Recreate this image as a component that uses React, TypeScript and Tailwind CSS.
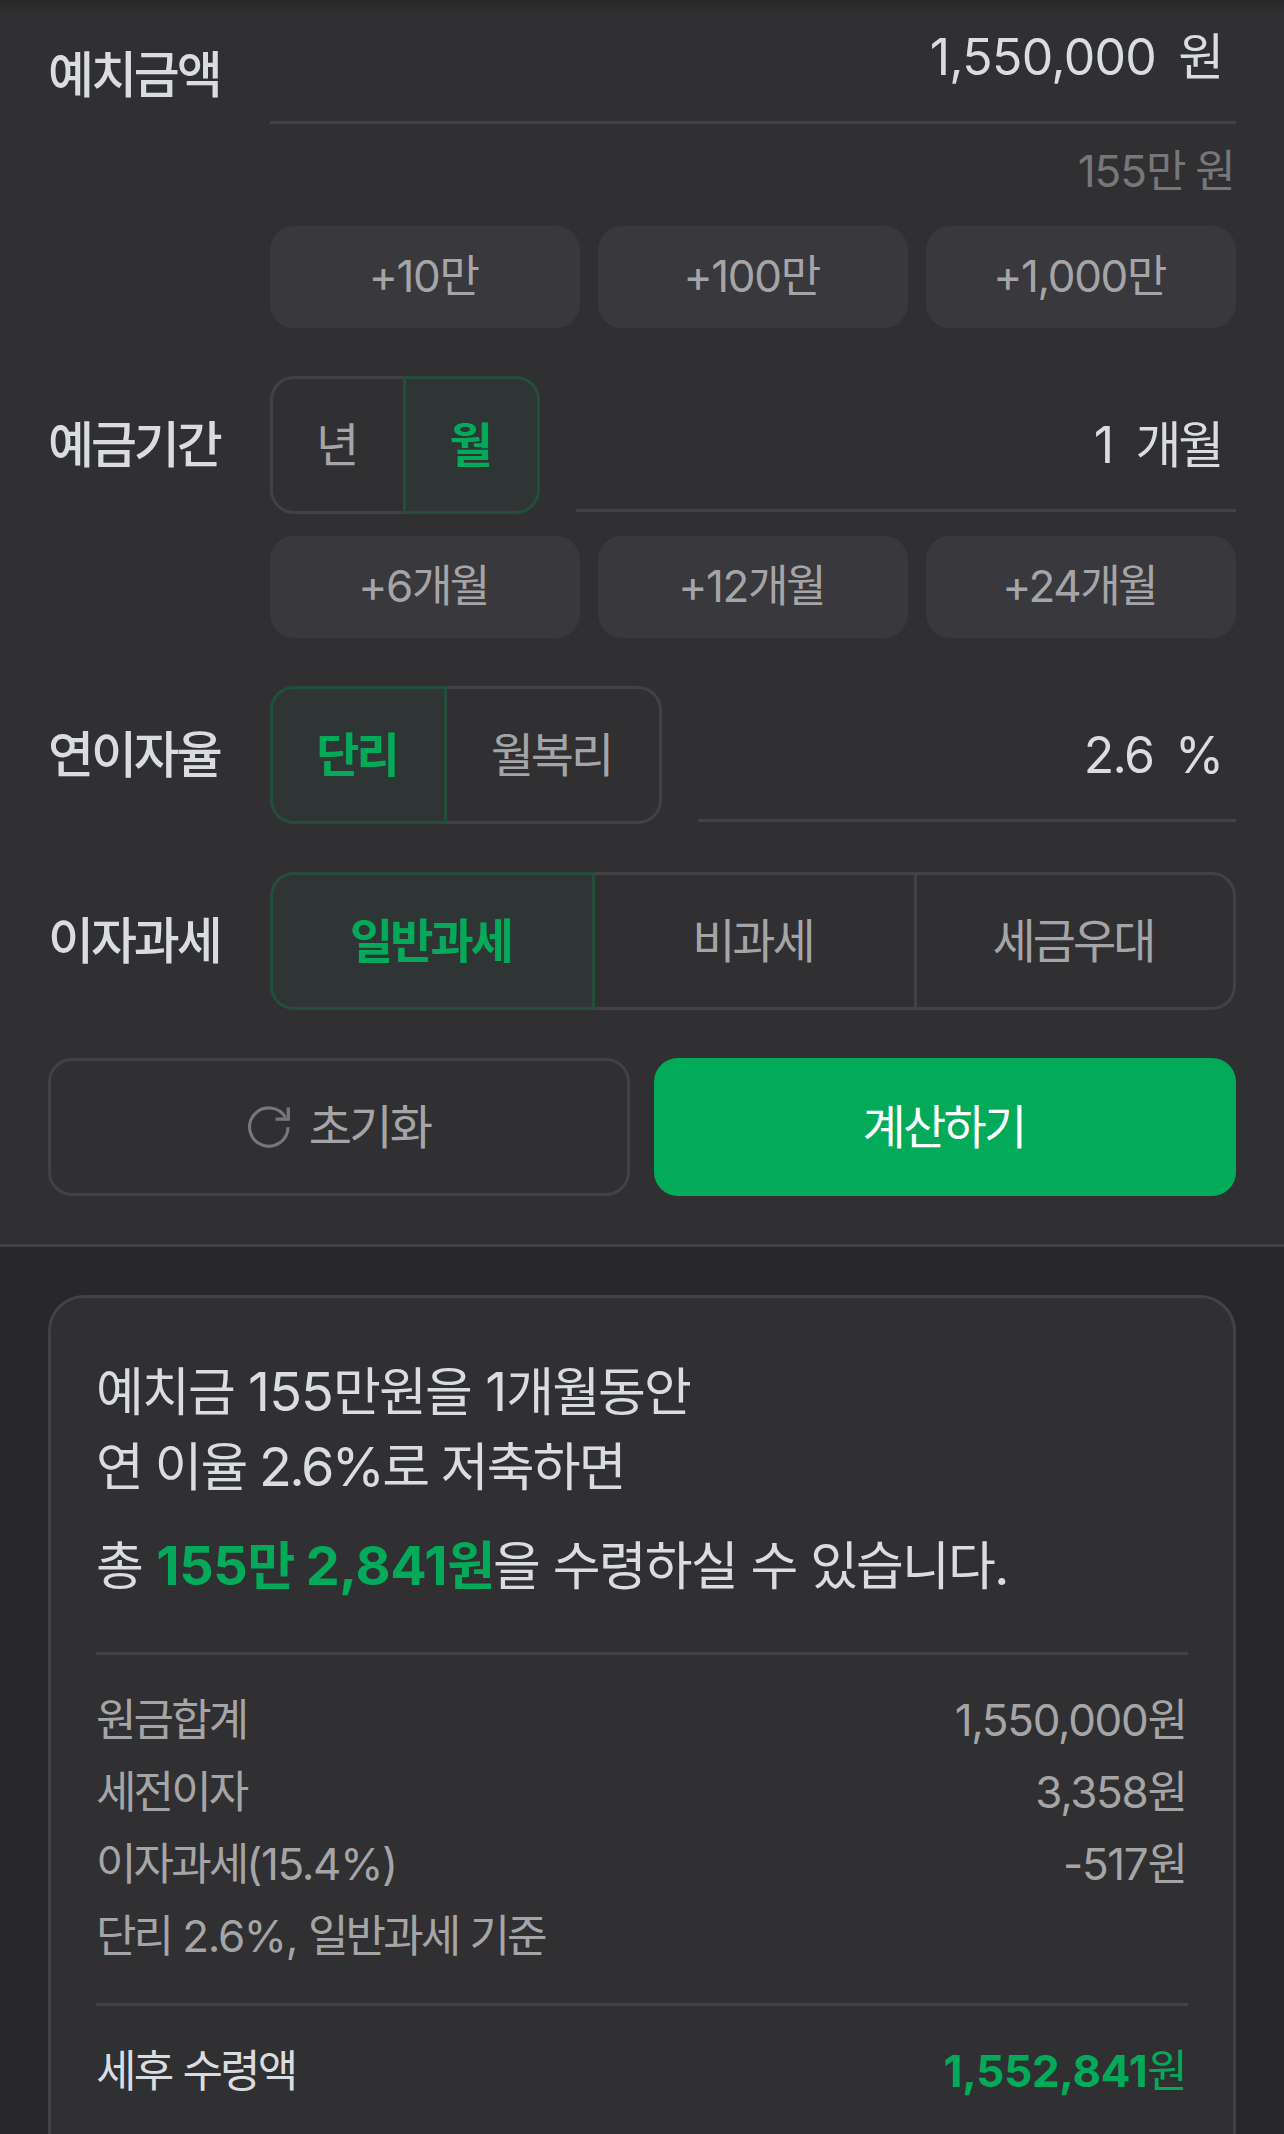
import { useState } from 'react';
import type { ReactNode } from 'react';
import clsx from 'clsx';

const AMOUNT_STEPS = ['+10만', '+100만', '+1,000만'];
const PERIOD_STEPS = ['+6개월', '+12개월', '+24개월'];

const DETAILS = [
  { label: '원금합계', value: '1,550,000원' },
  { label: '세전이자', value: '3,358원' },
  { label: '이자과세(15.4%)', value: '-517원' },
  { label: '단리 2.6%, 일반과세 기준', value: '' },
];

// Hangul is tracked tighter than digits and punctuation, so the latin runs get their own span
function Mixed({ text, latin = 'tracking-[-1.35px]' }: { text: string; latin?: string }) {
  return (
    <span>
      {text.split(/([\x20-\x7e]+)/).map((part, i) =>
        i % 2 === 1 ? (
          <span key={i} className={clsx('leading-none', latin)}>
            {part}
          </span>
        ) : (
          part
        )
      )}
    </span>
  );
}

function RefreshIcon() {
  return (
    <svg className="w-[42px] h-[42px] text-[#777779]" viewBox="0 0 42 42" fill="none" stroke="currentColor">
      <path strokeWidth={3.1} d="M40 21.2A19.2 19.2 0 1 1 37.4 11.4" />
      <path strokeWidth={3.3} d="M40.3 1.5V13.2H27.5" />
    </svg>
  );
}

function Row({ label, className, children }: { label: string; className?: string; children: ReactNode }) {
  return (
    <div className="flex items-start">
      <div
        className={clsx(
          'w-[222px] shrink-0 h-[138px] flex items-center text-[50px] font-medium tracking-[-3.1px]',
          className
        )}
      >
        {label}
      </div>
      <div className="flex-1">{children}</div>
    </div>
  );
}

interface FieldProps {
  value: string;
  unit: string;
  valueClass?: string;
}

function Field({ value, unit, valueClass = 'tracking-[-0.7px]' }: FieldProps) {
  return (
    <div className="flex-1 h-[136px] pt-[6px] pr-[15px] flex items-center justify-end gap-[22px] border-b-3 border-[#424245] text-[50px]">
      <span className={valueClass}>{value}</span>
      <span className="tracking-[-3.2px]">{unit}</span>
    </div>
  );
}

function StepButtons({ steps }: { steps: string[] }) {
  return (
    <div className="grid grid-cols-3 gap-[18px]">
      {steps.map((step) => (
        <button
          key={step}
          className="h-[102px] pb-0.5 pr-1 rounded-3xl bg-[#39383d] text-[44px] tracking-[-2.7px] text-[#a5a5a7]"
        >
          <Mixed text={step} />
        </button>
      ))}
    </div>
  );
}

interface Option {
  label: string;
  width: string;
}

function Segmented({ options, initial }: { options: Option[]; initial: number }) {
  const [active, setActive] = useState(initial);

  return (
    <div className="flex">
      {options.map((option, i) => (
        <button
          key={option.label}
          onClick={() => setActive(i)}
          className={clsx(
            'relative h-[138px] pr-1 border-3 text-[47px] tracking-[-3px] first:rounded-l-3xl last:rounded-r-3xl not-first:-ml-[3px]',
            option.width,
            active === i
              ? 'z-10 border-[#244e3c] bg-[#2e3534] font-semibold text-[#03aa5a]'
              : 'border-[#424245] text-[#a5a5a7]'
          )}
        >
          {option.label}
        </button>
      ))}
    </div>
  );
}

export default function App() {
  return (
    <div className="relative w-[1284px] h-[2134px] overflow-hidden bg-[#28282a] text-[#dadde0] font-['Inter','Noto_Sans_CJK_KR',sans-serif]">
      {/* Shadow of the sticky header */}
      <div className="absolute inset-x-0 top-0 h-4 bg-linear-to-b from-black/15 to-transparent z-20" />

      {/* Form */}
      <div className="-mt-3 px-12 pb-12 flex flex-col gap-12 bg-[#303032] border-b-3 border-[#424245]">
        <Row label="예치금액" className="mt-[18px]">
          <Field value="1,550,000" unit="원" />
          <div className="h-[102px] pb-[8px] pr-[3px] flex items-center justify-end text-[44px] tracking-[-2.7px] text-[#777779]">
            <Mixed text="155만 원" latin="tracking-[-1px]" />
          </div>
          <StepButtons steps={AMOUNT_STEPS} />
        </Row>

        <Row label="예금기간">
          <div className="flex gap-9 mb-[22px]">
            <Segmented
              initial={1}
              options={[
                { label: '년', width: 'w-[136px]' },
                { label: '월', width: 'w-[137px]' },
              ]}
            />
            <Field value="1" unit="개월" />
          </div>
          <StepButtons steps={PERIOD_STEPS} />
        </Row>

        <Row label="연이자율">
          <div className="flex gap-9">
            <Segmented
              initial={0}
              options={[
                { label: '단리', width: 'w-[177px]' },
                { label: '월복리', width: 'w-[218px]' },
              ]}
            />
            <Field value="2.6" unit="%" valueClass="tracking-[-1.8px]" />
          </div>
        </Row>

        <Row label="이자과세">
          <Segmented
            initial={0}
            options={[
              { label: '일반과세', width: 'w-[325px]' },
              { label: '비과세', width: 'w-[325px]' },
              { label: '세금우대', width: 'w-[322px]' },
            ]}
          />
        </Row>

        <div className="grid grid-cols-2 gap-6 text-[47px] tracking-[-2.8px]">
          <button className="h-[138px] flex items-center justify-center gap-[19px] rounded-3xl border-3 border-[#424245] text-[#a5a5a7]">
            <RefreshIcon />
            초기화
          </button>
          <button className="h-[138px] pr-[3px] rounded-3xl bg-[#03aa5a] text-white">계산하기</button>
        </div>
      </div>

      {/* Result */}
      <div className="px-12 pt-12">
        <div className="px-[45px] pt-[57px] pb-24 rounded-[36px] border-3 border-[#424245] bg-[#303032]">
          <div className="text-[52px] leading-[75px] tracking-[-1.9px]">
            <p>
              <Mixed text="예치금 155만원을 1개월동안" latin="text-[54px] tracking-[-0.9px]" />
            </p>
            <p>
              <Mixed text="연 이율 2.6%로 저축하면" latin="text-[54px] tracking-[-2.6px]" />
            </p>
            <p className="mt-6">
              <Mixed text="총 " latin="text-[54px] tracking-[-0.9px]" />
              <strong className="font-bold text-[#03aa5a]">
                <Mixed text="155만 2,841원" latin="text-[54px] tracking-[-0.4px]" />
              </strong>
              <Mixed text="을 수령하실 수 있습니다." latin="text-[54px] tracking-[-1.4px]" />
            </p>
          </div>

          <dl className="mt-12 pt-[29px] border-t-3 border-[#424245] text-[44px] leading-[72px] tracking-[-2.9px] text-[#a5a5a7]">
            {DETAILS.map((row) => (
              <div key={row.label} className="flex justify-between">
                <dt>
                  <Mixed text={row.label} />
                </dt>
                <dd className="pr-[3px]">
                  <Mixed text={row.value} />
                </dd>
              </div>
            ))}
          </dl>

          <div className="mt-[31px] pt-[29px] flex justify-between border-t-3 border-[#424245] text-[44px] leading-[72px] tracking-[-2.8px]">
            <Mixed text="세후 수령액" />
            <span className="pr-[3px] text-[#03aa5a]">
              <strong className="font-bold tracking-[-0.3px]">1,552,841</strong>원
            </span>
          </div>
        </div>
      </div>
    </div>
  );
}
